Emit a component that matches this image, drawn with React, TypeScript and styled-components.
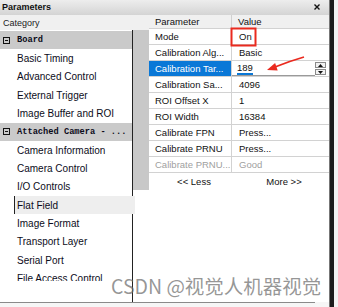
import React from 'react'
import styled, { createGlobalStyle } from 'styled-components'

const GlobalStyle = createGlobalStyle`
    html, body {
        margin: 0;
        padding: 0;
        background: #f3f3f3;
    }
    body {
        font-family: "Liberation Sans", Arial, sans-serif;
    }
`

type TreeEntry = { label: string; group?: boolean; selected?: boolean }

const tree: TreeEntry[] = [
    { label: 'Board', group: true },
    { label: 'Basic Timing' },
    { label: 'Advanced Control' },
    { label: 'External Trigger' },
    { label: 'Image Buffer and ROI' },
    { label: 'Attached Camera - ...', group: true },
    { label: 'Camera Information' },
    { label: 'Camera Control' },
    { label: 'I/O Controls' },
    { label: 'Flat Field', selected: true },
    { label: 'Image Format' },
    { label: 'Transport Layer' },
    { label: 'Serial Port' },
    { label: 'File Access Control' },
]

type Param = { name: string; value: string; editing?: boolean; disabled?: boolean }

const params: Param[] = [
    { name: 'Mode', value: 'On' },
    { name: 'Calibration Alg...', value: 'Basic' },
    { name: 'Calibration Tar...', value: '189', editing: true },
    { name: 'Calibration Sa...', value: '4096' },
    { name: 'ROI Offset X', value: '1' },
    { name: 'ROI Width', value: '16384' },
    { name: 'Calibrate FPN', value: 'Press...' },
    { name: 'Calibrate PRNU', value: 'Press...' },
    { name: 'Calibrate PRNU...', value: 'Good', disabled: true },
]

function App() {
    return (
        <Screen>
            <GlobalStyle />
            <Window>
                <TitleBar>
                    <span>Parameters</span>
                    <svg width="6" height="6" viewBox="0 0 6 6">
                        <path d="M0.5 0.5 L5.5 5.5 M5.5 0.5 L0.5 5.5" stroke="#111" strokeWidth="1.4" />
                    </svg>
                </TitleBar>
                <Body>
                    <LeftPane>
                        <PaneHeader>Category</PaneHeader>
                        <TreeFrame>
                            <TreeViewport>
                                {tree.map((t) => (
                                    <TreeItem key={t.label} $group={t.group} $selected={t.selected}>
                                        {t.group && <Collapse />}
                                        {t.label}
                                    </TreeItem>
                                ))}
                            </TreeViewport>
                        </TreeFrame>
                    </LeftPane>
                    <RightPane>
                        <GridArea>
                            <Gutter />
                            <Grid>
                                <HeaderRow>
                                    <HeadCell>Parameter</HeadCell>
                                    <HeadCell>Value</HeadCell>
                                </HeaderRow>
                                {params.map((p) => (
                                    <Row key={p.name}>
                                        <NameCell $active={p.editing} $disabled={p.disabled}>{p.name}</NameCell>
                                        {p.editing ? (
                                            <EditCell>
                                                <EditBox>
                                                    <Selected>{p.value}</Selected>
                                                </EditBox>
                                                <Spinner>
                                                    <SpinButton>
                                                        <svg width="5" height="3" viewBox="0 0 5 3"><path d="M0 3 L2.5 0 L5 3Z" fill="#111" /></svg>
                                                    </SpinButton>
                                                    <SpinButton>
                                                        <svg width="5" height="3" viewBox="0 0 5 3"><path d="M0 0 L2.5 3 L5 0Z" fill="#111" /></svg>
                                                    </SpinButton>
                                                </Spinner>
                                            </EditCell>
                                        ) : (
                                            <ValueCell $disabled={p.disabled}>{p.value}</ValueCell>
                                        )}
                                    </Row>
                                ))}
                                <ButtonRow>
                                    <LinkButton>&lt;&lt; Less</LinkButton>
                                    <LinkButton>More &gt;&gt;</LinkButton>
                                </ButtonRow>
                            </Grid>
                        </GridArea>
                    </RightPane>
                </Body>
                <Footer>
                    <FooterLine />
                </Footer>
            </Window>
            <Edge />
            <Markup width="338" height="307" viewBox="0 0 338 307">
                <rect x="231.5" y="28.5" width="24" height="17" fill="none" stroke="#ea2a1f" strokeWidth="2" />
                <path d="M304 57 Q290 61 275 67" fill="none" stroke="#ea2a1f" strokeWidth="1.8" />
                <polygon points="267,70 277.7,70.5 275.1,62.9" fill="#ea2a1f" />
            </Markup>
            <Watermark>CSDN @视觉人机器视觉</Watermark>
        </Screen>
    )
}

const Screen = styled.div`
    position: relative;
    display: flex;
    width: 338px;
    height: 307px;
    overflow: hidden;
    background: #f3f3f3;
`

const Window = styled.div`
    width: 329px;
    display: flex;
    flex-direction: column;
    background: #fff;
`

const TitleBar = styled.div`
    height: 15px;
    box-sizing: border-box;
    display: flex;
    align-items: center;
    justify-content: space-between;
    padding: 0 9px 1px 2px;
    background: linear-gradient(#ededed, #d4d4d4);
    font-size: 9px;
    font-weight: bold;
    color: #111;
`

const Body = styled.div`
    flex: 1;
    display: flex;
    min-height: 0;
`

const LeftPane = styled.div`
    width: 133px;
    display: flex;
    flex-direction: column;
`

const PaneHeader = styled.div`
    height: 15px;
    display: flex;
    align-items: center;
    padding-left: 3px;
    background: #f0f0f0;
    font-size: 9px;
    color: #222;
`

const TreeFrame = styled.div`
    flex: 1;
    border-right: 1px solid #222;
    padding-top: 1px;
`

const TreeViewport = styled.div`
    height: 250px;
    overflow-y: clip;
    overflow-x: visible;
`

const TreeItem = styled.div<{ $group?: boolean; $selected?: boolean }>`
    position: relative;
    height: 18.33px;
    display: flex;
    align-items: center;
    white-space: nowrap;
    box-sizing: border-box;
    padding-left: ${(p) => (p.$group ? '3px' : p.$selected ? '2px' : '17px')};
    margin-left: ${(p) => (p.$selected ? '14px' : '0')};
    margin-right: ${(p) => (p.$selected ? '-3px' : '0')};
    border-left: ${(p) => (p.$selected ? '1px solid #222' : 'none')};
    background: ${(p) => (p.$group ? '#cacaca' : p.$selected ? '#eeeeee' : 'transparent')};
    font-family: ${(p) => (p.$group ? '"Liberation Mono", "Courier New", monospace' : '"Liberation Sans", Arial, sans-serif')};
    font-size: ${(p) => (p.$group ? '8.7px' : '10px')};
    font-weight: ${(p) => (p.$group ? 'bold' : 'normal')};
    color: #0c0c1a;
`

const Collapse = styled.span`
    position: relative;
    width: 7px;
    height: 7px;
    box-sizing: border-box;
    border: 1px solid #111;
    margin-right: 7px;

    &::after {
        content: '';
        position: absolute;
        left: 1px;
        right: 1px;
        top: 2px;
        height: 1px;
        background: #111;
    }
`

const RightPane = styled.div`
    flex: 1;
    display: flex;
    flex-direction: column;
`

const GridArea = styled.div`
    height: 175px;
    display: flex;
`

const Gutter = styled.div`
    width: 16px;
    background: linear-gradient(#f0f0f0 15px, #c8c8c8 15px);
`

const Grid = styled.div`
    flex: 1;
    display: flex;
    flex-direction: column;
    background: #fff;
    font-size: 9.5px;
    color: #111;
`

const HeaderRow = styled.div`
    height: 13px;
    display: grid;
    grid-template-columns: 83px 1fr;
    background: #f0f0f0;
`

const HeadCell = styled.div`
    display: flex;
    align-items: center;
    padding-left: 6px;
    font-size: 9.5px;
    &:first-child {
        border-right: 1px solid #d0d0d0;
    }
`

const Row = styled.div`
    height: 16px;
    box-sizing: border-box;
    display: grid;
    grid-template-columns: 83px 1fr;
    border-top: 1px solid #d2d2d2;
`

const NameCell = styled.div<{ $active?: boolean; $disabled?: boolean }>`
    display: flex;
    align-items: center;
    padding-left: 6px;
    overflow: hidden;
    white-space: nowrap;
    border-right: 1px solid #d2d2d2;
    background: ${(p) => (p.$active ? '#0a78d7' : 'transparent')};
    color: ${(p) => (p.$active ? '#fff' : p.$disabled ? '#a0a0a0' : '#111')};
`

const ValueCell = styled.div<{ $disabled?: boolean }>`
    display: flex;
    align-items: center;
    padding-left: 7px;
    white-space: nowrap;
    color: ${(p) => (p.$disabled ? '#a0a0a0' : '#111')};
`

const EditCell = styled.div`
    display: flex;
    align-items: stretch;
`

const EditBox = styled.div`
    width: 83px;
    box-sizing: border-box;
    display: flex;
    align-items: center;
    padding-left: 5px;
    border-bottom: 1px solid #9a9a9a;
`

const Selected = styled.span`
    line-height: 11px;
    border-bottom: 2px solid #0a78d7;
`

const Spinner = styled.div`
    width: 12px;
    display: flex;
    flex-direction: column;
    justify-content: center;
    gap: 1px;
`

const SpinButton = styled.div`
    height: 6px;
    width: 11px;
    box-sizing: border-box;
    display: flex;
    align-items: center;
    justify-content: center;
    border: 1px solid #8a8a8a;
    background: #f2f2f2;
`

const ButtonRow = styled.div`
    flex: 1;
    display: flex;
    align-items: center;
    border-top: 1px solid #d2d2d2;
`

const LinkButton = styled.div`
    flex: 1;
    text-align: center;
    font-size: 9.5px;
    color: #111;
`

const Footer = styled.div`
    height: 5px;
    background: #f6f6f6;
`

const FooterLine = styled.div`
    width: 315px;
    border-top: 1px solid #8a8a8a;
`

const Edge = styled.div`
    width: 4px;
    background: #1c1c1c;
    border-left: 1px solid #777;
`

const Markup = styled.svg`
    position: absolute;
    left: 0;
    top: 0;
    pointer-events: none;
`

const Watermark = styled.div`
    position: absolute;
    left: 111px;
    top: 274px;
    font-family: "Noto Sans CJK SC", "Liberation Sans", sans-serif;
    font-size: 19.5px;
    line-height: 24px;
    color: rgba(110, 110, 110, 0.72);
    white-space: nowrap;
    pointer-events: none;
`

export default App
